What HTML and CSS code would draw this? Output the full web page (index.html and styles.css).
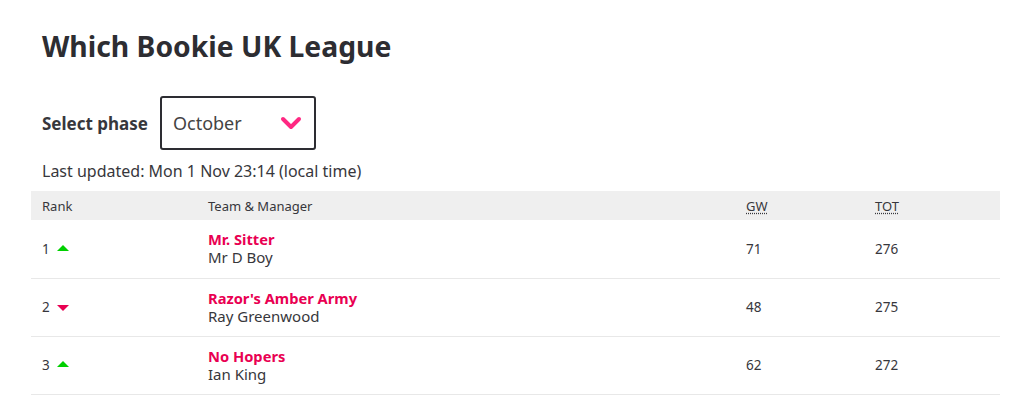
FILE: index.html
```html
<!DOCTYPE html>
<html>
<head>
<meta charset="utf-8">
<link rel="stylesheet" href="styles.css">
</head>
<body>
<div class="page">
  <h1 class="title">Which Bookie UK League</h1>
  <div class="phase">
    <label class="phase-label">Select phase</label>
    <div class="select">
      <span class="select-value">October</span>
      <svg class="chev" width="22" height="14" viewBox="0 0 22 14"><path d="M3 3 L11 11 L19 3" fill="none" stroke="#ff2882" stroke-width="4" stroke-linecap="round" stroke-linejoin="round"/></svg>
    </div>
  </div>
  <p class="updated">Last updated: Mon 1 Nov 23:14 (local time)</p>
  <table class="standings">
    <thead>
      <tr>
        <th class="c-rank">Rank</th>
        <th class="c-team">Team &amp; Manager</th>
        <th class="c-gw"><abbr>GW</abbr></th>
        <th class="c-tot"><abbr>TOT</abbr></th>
      </tr>
    </thead>
    <tbody>
      <tr>
        <td class="c-rank">1 <span class="up"></span></td>
        <td class="c-team"><div class="team">Mr. Sitter</div><div class="mgr">Mr D Boy</div></td>
        <td class="c-gw">71</td>
        <td class="c-tot">276</td>
      </tr>
      <tr>
        <td class="c-rank">2 <span class="down"></span></td>
        <td class="c-team"><div class="team">Razor's Amber Army</div><div class="mgr">Ray Greenwood</div></td>
        <td class="c-gw">48</td>
        <td class="c-tot">275</td>
      </tr>
      <tr>
        <td class="c-rank">3 <span class="up"></span></td>
        <td class="c-team"><div class="team">No Hopers</div><div class="mgr">Ian King</div></td>
        <td class="c-gw">62</td>
        <td class="c-tot">272</td>
      </tr>
    </tbody>
  </table>
</div>
</body>
</html>
```
FILE: styles.css
```css
* { box-sizing: border-box; }
body {
  margin: 0;
  font-family: "Noto Sans", "Lato", sans-serif;
  color: #37373c;
  background: #fff;
}
.page {
  padding: 24px 24px 0 31px;
}
.title {
  margin: 0 0 0 11px;
  font-size: 28.3px;
  font-weight: 700;
  line-height: 44px;
  color: #2d2d32;
}
.phase {
  display: flex;
  align-items: center;
  margin: 28px 0 0 11px;
}
.phase-label {
  font-weight: 700;
  font-size: 17px;
  margin-right: 12px;
}
.select {
  width: 156px;
  height: 54px;
  border: 2px solid #2d2d32;
  border-radius: 3px;
  display: flex;
  align-items: center;
  justify-content: space-between;
  padding: 0 12px 0 11px;
}
.select-value {
  font-size: 18px;
  color: #444;
}
.updated {
  margin: 9px 0 8px 11px;
  font-size: 16px;
  line-height: 24px;
}
.standings {
  width: 969px;
  border-collapse: collapse;
  font-size: 13.5px;
}
.standings th {
  background: #efefef;
  font-weight: 400;
  font-size: 13px;
  text-align: left;
  height: 29px;
  padding: 0;
  color: #37373c;
}
.standings td {
  height: 58px;
  padding: 0;
  border-bottom: 1px solid #e8e8e8;
  vertical-align: middle;
}
.c-rank { width: 177px; padding-left: 11px !important; }
.c-team { width: 538px; }
.c-gw { width: 129px; }
abbr { text-decoration: underline dotted; text-underline-offset: 2px; }
.team {
  color: #e90052;
  font-weight: 700;
  font-size: 14.7px;
  line-height: 17px;
}
.mgr {
  font-size: 15px;
  line-height: 18px;
}
.up, .down {
  display: inline-block;
  width: 0; height: 0;
  margin-left: 4px;
  vertical-align: middle;
  border-left: 6px solid transparent;
  border-right: 6px solid transparent;
}
.up { border-bottom: 6px solid #00d000; position: relative; top: -2px; }
.down { border-top: 6px solid #e90052; }
```
